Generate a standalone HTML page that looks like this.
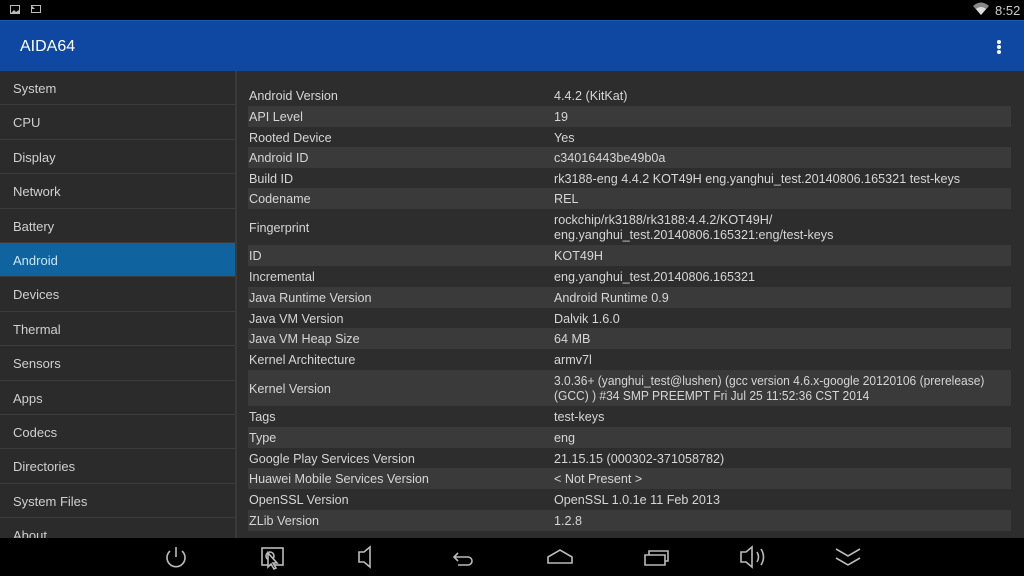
<!DOCTYPE html>
<html><head><meta charset="utf-8"><style>
*{margin:0;padding:0;box-sizing:border-box}
html,body{width:1024px;height:576px;overflow:hidden}
body{background:#000;font-family:"Liberation Sans",sans-serif;position:relative}
.sb{position:absolute;left:0;top:0;width:1024px;height:20px;background:#000}
.ab{position:absolute;left:0;top:20px;width:1024px;height:51px;background:#0e48a2;border-top:1px solid #1a5bc0}
.ab .t{position:absolute;left:20px;top:17px;color:#fff;font-size:16px}
.dots{position:absolute;left:997px;top:19px;width:4px}
.dots i{display:block;width:3.5px;height:3.5px;border-radius:2px;background:#fff;margin-bottom:1.6px}
.left{position:absolute;left:0;top:71px;width:235px;height:467px;background:#2b2b2b;overflow:hidden}
.nav{height:34.4px;border-bottom:1px solid #3c3c3c;color:#d0d0d0;font-size:13px;padding-left:13px;line-height:36px}
.nav.sel{background:#0f64a0;color:#cfe3f3}
.div{position:absolute;left:235px;top:71px;width:2px;height:467px;background:#3a3a3a}
.right{position:absolute;left:237px;top:71px;width:787px;height:467px;background:#2d2d2d;overflow:hidden}
.row{position:absolute;left:11px;width:763px;color:#d6d6d6;font-size:12.6px}
.row.s{background:#3a3a3a}
.row .k{position:absolute;left:1px;margin-top:1px}
.row .v{position:absolute;left:306px;line-height:15px;white-space:nowrap;margin-top:1px}
.bb{position:absolute;left:0;top:538px;width:1024px;height:38px;background:#000}
</style></head><body>
<div class="sb">
<svg width="60" height="20" style="position:absolute;left:0;top:0"><rect x="10.5" y="5.5" width="9" height="8" fill="none" stroke="#bbb"/><path d="M11 13l3-3 2 2 3-2v3z" fill="#bbb"/><rect x="31.5" y="5.5" width="9" height="7" fill="none" stroke="#bbb"/><path d="M32 6l3 3h-3z" fill="#bbb"/></svg>
<svg width="20" height="20" style="position:absolute;left:971px;top:0"><path d="M2 6 Q10 -1 18 6 L10 15 Z" fill="#888"/><path d="M5 9 Q10 5 15 9 L10 15Z" fill="#ddd"/></svg>
<div style="position:absolute;left:995px;top:3px;color:#ccc;font-size:13px">8:52</div>
</div>
<div class="ab"><div class="t">AIDA64</div><div class="dots"><i></i><i></i><i></i></div></div>
<div class="left">
<div class="nav">System</div><div class="nav">CPU</div><div class="nav">Display</div><div class="nav">Network</div><div class="nav">Battery</div><div class="nav sel">Android</div><div class="nav">Devices</div><div class="nav">Thermal</div><div class="nav">Sensors</div><div class="nav">Apps</div><div class="nav">Codecs</div><div class="nav">Directories</div><div class="nav">System Files</div><div class="nav">About</div>
</div>
<div class="div"></div>
<div class="right">
<div class="row" style="top:13.5px;height:21px"><span class="k" style="top:3px">Android Version</span><span class="v" style="top:3px">4.4.2 (KitKat)</span></div>
<div class="row s" style="top:34.5px;height:21px"><span class="k" style="top:3px">API Level</span><span class="v" style="top:3px">19</span></div>
<div class="row" style="top:55.5px;height:21px"><span class="k" style="top:3px">Rooted Device</span><span class="v" style="top:3px">Yes</span></div>
<div class="row s" style="top:76px;height:20.5px"><span class="k" style="top:3px">Android ID</span><span class="v" style="top:3px">c34016443be49b0a</span></div>
<div class="row" style="top:96.5px;height:21px"><span class="k" style="top:3px">Build ID</span><span class="v" style="top:3px">rk3188-eng 4.4.2 KOT49H eng.yanghui_test.20140806.165321 test-keys</span></div>
<div class="row s" style="top:117px;height:21px"><span class="k" style="top:3px">Codename</span><span class="v" style="top:3px">REL</span></div>
<div class="row" style="top:138px;height:36px"><span class="k" style="top:11px">Fingerprint</span><span class="v" style="top:3px">rockchip/rk3188/rk3188:4.4.2/KOT49H/<br>eng.yanghui_test.20140806.165321:eng/test-keys</span></div>
<div class="row s" style="top:174px;height:21px"><span class="k" style="top:3px">ID</span><span class="v" style="top:3px">KOT49H</span></div>
<div class="row" style="top:195px;height:21px"><span class="k" style="top:3px">Incremental</span><span class="v" style="top:3px">eng.yanghui_test.20140806.165321</span></div>
<div class="row s" style="top:216px;height:20.5px"><span class="k" style="top:3px">Java Runtime Version</span><span class="v" style="top:3px">Android Runtime 0.9</span></div>
<div class="row" style="top:236.5px;height:21px"><span class="k" style="top:3px">Java VM Version</span><span class="v" style="top:3px">Dalvik 1.6.0</span></div>
<div class="row s" style="top:257px;height:21px"><span class="k" style="top:3px">Java VM Heap Size</span><span class="v" style="top:3px">64 MB</span></div>
<div class="row" style="top:278px;height:21px"><span class="k" style="top:3px">Kernel Architecture</span><span class="v" style="top:3px">armv7l</span></div>
<div class="row s" style="top:299px;height:36px"><span class="k" style="top:11px">Kernel Version</span><span class="v" style="top:3px;font-size:12.6px;transform:scaleX(0.955);transform-origin:0 0">3.0.36+ (yanghui_test@lushen) (gcc version 4.6.x-google 20120106 (prerelease)<br>(GCC) ) #34 SMP PREEMPT Fri Jul 25 11:52:36 CST 2014</span></div>
<div class="row" style="top:335px;height:21px"><span class="k" style="top:3px">Tags</span><span class="v" style="top:3px">test-keys</span></div>
<div class="row s" style="top:356px;height:20.5px"><span class="k" style="top:3px">Type</span><span class="v" style="top:3px">eng</span></div>
<div class="row" style="top:376.5px;height:21px"><span class="k" style="top:3px">Google Play Services Version</span><span class="v" style="top:3px">21.15.15 (000302-371058782)</span></div>
<div class="row s" style="top:397px;height:21px"><span class="k" style="top:3px">Huawei Mobile Services Version</span><span class="v" style="top:3px">&lt; Not Present &gt;</span></div>
<div class="row" style="top:418px;height:21px"><span class="k" style="top:3px">OpenSSL Version</span><span class="v" style="top:3px">OpenSSL 1.0.1e 11 Feb 2013</span></div>
<div class="row s" style="top:439px;height:21px"><span class="k" style="top:3px">ZLib Version</span><span class="v" style="top:3px">1.2.8</span></div>
</div>
<div class="bb">
<svg width="1024" height="38" fill="none" stroke="#bbb" stroke-width="1.6">
<path d="M170 13 A9 9 0 1 0 182 13"/><path d="M176 9v10"/>
<rect x="262" y="10" width="21" height="17"/><circle cx="270" cy="18" r="4"/><path d="M268 15l0 14 3-3 3 5 2-1-3-5h4z" fill="#000"/>
<path d="M359 14h5l6-5v20l-6-5h-5z"/>
<path d="M454 19h14a4 4 0 0 1 0 8h-10M458 15l-4 4 4 4"/>
<path d="M548 25v-6l12-7 12 7v6z"/>
<path d="M645 17h20v10h-20zM649 17v-4h19v10h-3"/>
<path d="M741 14h5l6-5v20l-6-5h-5zM757 14q3 5 0 10M761 11q5 8 0 16"/>
<path d="M836 11l12 7 12-7M836 20l12 7 12-7"/>
</svg>
</div>
</body></html>
